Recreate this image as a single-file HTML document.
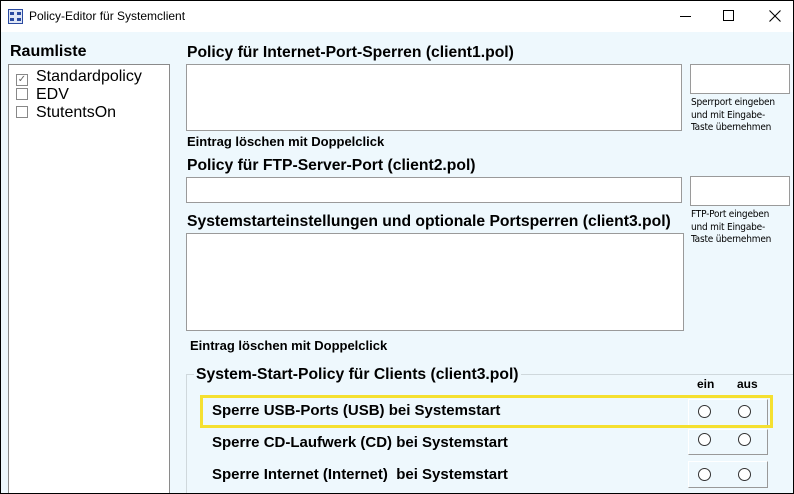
<!DOCTYPE html>
<html><head><meta charset="utf-8"><style>
*{margin:0;padding:0;box-sizing:border-box}
html,body{width:794px;height:494px;overflow:hidden}
body{background:#000;font-family:"Liberation Sans",Arial,sans-serif;position:relative}
#win{position:absolute;left:1px;top:1px;width:792px;height:492px;background:#eef8fd;overflow:hidden}
#tb{position:absolute;left:0;top:0;width:792px;height:31px;background:#fff}
.a{position:absolute;white-space:nowrap}
.h{font-weight:bold;font-size:15.7px;color:#000}
.box{position:absolute;background:#fff;border:1px solid #9a9a9a}
.sm{font-size:10px;line-height:12.5px;color:#000;font-family:"DejaVu Sans Condensed","Liberation Sans Narrow","Liberation Sans",sans-serif;letter-spacing:-0.2px}
.r{font-weight:bold;font-size:15px}
.e{font-weight:bold;font-size:13px}
.rad{position:absolute;width:13px;height:13px;border:1px solid #333;border-radius:50%;background:#fff}
.pb{position:absolute;left:687px;width:80px;border-top:1px solid #fff;border-left:1px solid #fff;border-right:1px solid #999;border-bottom:1px solid #999}
.cb{display:inline-block;width:12px;height:12px;border:1px solid #888;margin-right:8px;vertical-align:-1px;font-size:10px;line-height:10px;text-align:center;color:#666}
</style></head><body><div id="win">
<div id="tb">
<svg class="a" style="left:7px;top:8px" width="15" height="15" viewBox="0 0 15 15"><rect x="0.5" y="0.5" width="14" height="14" fill="#dfe6f5" stroke="#2a4aa0"/><rect x="2" y="3" width="4" height="3" fill="#2a4aa0"/><rect x="9" y="3" width="4" height="3" fill="#2a4aa0"/><rect x="2" y="9" width="4" height="3" fill="#2a4aa0"/><rect x="9" y="9" width="4" height="3" fill="#2a4aa0"/></svg>
<div class="a" style="left:28px;top:8px;font-size:12px;color:#000">Policy-Editor für Systemclient</div>
<div class="a" style="left:679px;top:15px;width:11px;height:1px;background:#000"></div>
<div class="a" style="left:722px;top:9px;width:11px;height:11px;border:1px solid #000"></div>
<svg class="a" style="left:768px;top:9px" width="12" height="12"><path d="M0.5 0.5L11.5 11.5M11.5 0.5L0.5 11.5" stroke="#000" stroke-width="1.1"/></svg>
</div>
<div class="a h" style="left:9px;top:42px;font-size:16px">Raumliste</div>
<div class="box" style="left:7px;top:63px;width:162px;height:440px;border-color:#8a8a8a">
<div class="a" style="left:7px;top:3px;font-size:16px;line-height:18px;color:#000">
<div><span class="cb">✓</span>Standardpolicy</div>
<div><span class="cb"></span>EDV</div>
<div><span class="cb"></span>StutentsOn</div>
</div></div>
<div class="a h" style="left:186px;top:43px">Policy für Internet-Port-Sperren (client1.pol)</div>
<div class="box" style="left:185px;top:63px;width:496px;height:67px"></div>
<div class="box" style="left:689px;top:63px;width:100px;height:30px"></div>
<div class="a sm" style="left:690px;top:96px">Sperrport eingeben<br>und mit Eingabe-<br>Taste übernehmen</div>
<div class="a e" style="left:186px;top:133px">Eintrag löschen mit Doppelclick</div>
<div class="a h" style="left:186px;top:156px">Policy für FTP-Server-Port (client2.pol)</div>
<div class="box" style="left:185px;top:176px;width:496px;height:26px"></div>
<div class="box" style="left:689px;top:175px;width:100px;height:30px"></div>
<div class="a sm" style="left:690px;top:208px">FTP-Port eingeben<br>und mit Eingabe-<br>Taste übernehmen</div>
<div class="a h" style="left:186px;top:212px">Systemstarteinstellungen und optionale Portsperren (client3.pol)</div>
<div class="box" style="left:185px;top:232px;width:498px;height:98px"></div>
<div class="a e" style="left:189px;top:337px">Eintrag löschen mit Doppelclick</div>
<div class="a" style="left:185px;top:373px;width:610px;height:130px;border-top:1px solid #cfd8dc;border-left:1px solid #cfd8dc"></div>
<div class="a h" style="left:193px;top:365px;background:#eef8fd;padding:0 2px">System-Start-Policy für Clients (client3.pol)</div>
<div class="a" style="left:696px;top:376px;font-weight:bold;font-size:12px">ein</div>
<div class="a" style="left:736px;top:376px;font-weight:bold;font-size:12px">aus</div>
<div class="pb" style="top:398px;height:28px"></div>
<div class="pb" style="top:428px;height:26px"></div>
<div class="pb" style="top:460px;height:27px"></div>
<div class="a" style="left:199px;top:394px;width:573px;height:33px;border:3px solid #f5e030"></div>
<div class="a r" style="left:211px;top:401px">Sperre USB-Ports (USB) bei Systemstart</div>
<div class="a r" style="left:211px;top:433px">Sperre CD-Laufwerk (CD) bei Systemstart</div>
<div class="a r" style="left:211px;top:465px">Sperre Internet (Internet)&nbsp; bei Systemstart</div>
<div class="rad" style="left:697px;top:404px"></div><div class="rad" style="left:737px;top:404px"></div>
<div class="rad" style="left:697px;top:432px"></div><div class="rad" style="left:737px;top:432px"></div>
<div class="rad" style="left:697px;top:467px"></div><div class="rad" style="left:737px;top:467px"></div>
</div></body></html>
